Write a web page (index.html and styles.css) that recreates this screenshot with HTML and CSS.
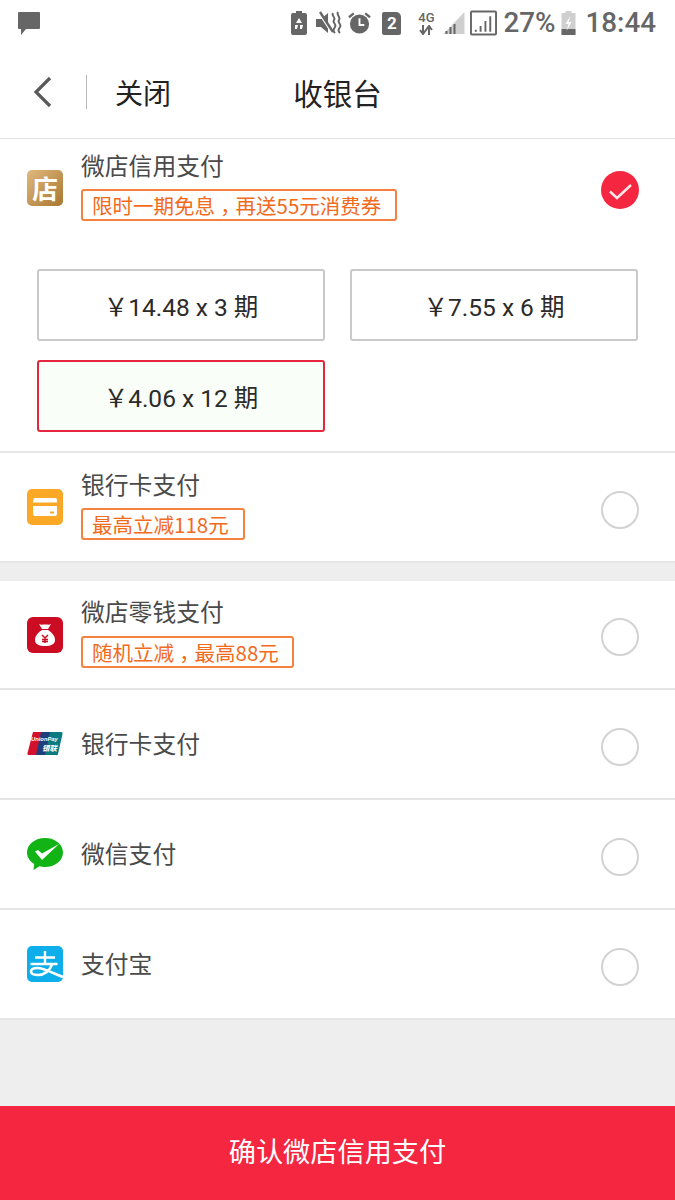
FILE: index.html
```html
<!DOCTYPE html>
<html lang="zh">
<head>
<meta charset="utf-8">
<title>收银台</title>
<link rel="stylesheet" href="styles.css">
</head>
<body>
<div class="page">
  <div class="status">
    <svg class="ic-msg" viewBox="0 0 24 24"><path d="M2 1h20a1 1 0 0 1 1 1v15a1 1 0 0 1-1 1H9l-5 6v-6H2a1 1 0 0 1-1-1V2a1 1 0 0 1 1-1z" fill="#666"/></svg>
    <div class="status-right">
      <svg class="si-batt" viewBox="0 0 16 24"><path d="M5 0h6v2h3a2 2 0 0 1 2 2v18a2 2 0 0 1-2 2H2a2 2 0 0 1-2-2V4a2 2 0 0 1 2-2h3z" fill="#666"/><path d="M8 7l3 5H5zM4 14h3l-1 4H4zM9 14h3l-1 4H9z" fill="#fff"/></svg>
      <svg class="si-mute" viewBox="0 0 26 24"><path d="M0 8h5l7-6v20l-7-6H0z" fill="#666"/><path d="M3 2l13 20" stroke="#fff" stroke-width="2"/><path d="M4 1l13 20" stroke="#666" stroke-width="2.4"/><path d="M17 2c-2 3 3 4 1 7s3 4 1 7-2 4 0 6M22 1c-2 3 3 5 1 8s3 4 1 7-2 4 0 6" fill="none" stroke="#666" stroke-width="2"/></svg>
      <svg class="si-alarm" viewBox="0 0 24 24"><circle cx="12" cy="13" r="10" fill="#666"/><path d="M12 7v7h5" fill="none" stroke="#fff" stroke-width="2"/><path d="M1 6l5-4M23 6l-5-4" stroke="#666" stroke-width="2.4"/></svg>
      <span class="si-sim">2</span>
      <span class="si-net"><b>4G</b><svg class="net-arrows" viewBox="0 0 18 10"><path d="M6 0v8M3 5l3 4 3-4M12 10V2M9 5l3-4 3 4" fill="none" stroke="#666" stroke-width="2"/></svg></span>
      <svg class="si-sig1" viewBox="0 0 22 24"><path d="M21 1v22H0z" fill="#cfcfcf"/><path d="M2 23h2v-3H2zM6 23h2v-7H6zM10 23h2V13h-2z" fill="#666"/></svg>
      <svg class="si-sig2" viewBox="0 0 28 26"><rect x="1" y="1" width="26" height="24" rx="1" fill="none" stroke="#666" stroke-width="2"/><path d="M5 22h2v-2H5zM10 22h2v-6h-2zM15 22h2V11h-2zM20 22h2V6h-2z" fill="#666"/></svg>
      <span class="st-pct">27%</span>
      <svg class="si-charge" viewBox="0 0 14 24"><path d="M4 0h6v2h4v22H0V2h4z" fill="#cfcfcf"/><path d="M0 18h14v6H0z" fill="#666"/><path d="M9 5l-5 8h3l-2 7 5-9H7z" fill="#fff"/></svg>
      <span class="st-time">18:44</span>
    </div>
  </div>

  <header class="nav">
    <div class="nav-left">
      <svg class="back" viewBox="0 0 20 32"><path d="M17 2L3 16l14 14" fill="none" stroke="#5a5a5a" stroke-width="3.2"/></svg>
      <span class="nav-div"></span>
      <span class="nav-close">关闭</span>
    </div>
    <h1 class="nav-title">收银台</h1>
    <div></div>
  </header>

  <section class="pay pay-open">
    <div class="row row-top">
      <span class="logo logo-shop">店</span>
      <div class="info info-tag">
        <div class="name">微店信用支付</div>
        <div class="tag tag-a">限时一期免息<span class="cm">，</span>再送55元消费券</div>
      </div>
      <span class="radio radio-on"><svg viewBox="0 0 38 38"><path d="M9 20.500l7 6.500L30 14" fill="none" stroke="#ffe9ec" stroke-width="2.400"/></svg></span>
    </div>
    <div class="plans">
      <div class="plan">￥14.48 x 3 期</div>
      <div class="plan">￥7.55 x 6 期</div>
      <div class="plan plan-on">￥4.06 x 12 期</div>
    </div>
  </section>

  <section class="pay pay-tag">
    <div class="row">
      <span class="logo logo-card"><svg viewBox="0 0 36 36"><path d="M8 9h20a2 2 0 0 1 2 2v14a2 2 0 0 1-2 2H8a2 2 0 0 1-2-2V11a2 2 0 0 1 2-2z" fill="#fff"/><path d="M6 13.500h24v3.500H6z" fill="#fba826"/><path d="M23 22.500h4v2h-4z" fill="#fba826"/></svg></span>
      <div class="info info-tag">
        <div class="name">银行卡支付</div>
        <div class="tag tag-b">最高立减118元</div>
      </div>
      <span class="radio"></span>
    </div>
  </section>

  <div class="gap"></div>

  <section class="pay pay-tag pay-t2">
    <div class="row">
      <span class="logo logo-bag"><svg viewBox="0 0 36 36"><path d="M12 7c2 1 3 .5 6 .5s4 .5 6-.5l-3 5h-6z" fill="#fff"/><path d="M15 13h6c5 3 7 7 7 10 0 4-4 6-10 6S8 27 8 23c0-3 2-7 7-10z" fill="#fff"/><path d="M15 18l3 3 3-3M18 21v5M15 22.500h6M15 24.500h6" fill="none" stroke="#cb0c23" stroke-width="1.500"/></svg></span>
      <div class="info info-tag">
        <div class="name">微店零钱支付</div>
        <div class="tag tag-c">随机立减<span class="cm">，</span>最高88元</div>
      </div>
      <span class="radio"></span>
    </div>
  </section>

  <section class="pay pay-plain">
    <div class="row">
      <svg class="logo" viewBox="0 0 36 36"><path d="M6 6h9l-5 23H2a1.500 1.500 0 0 1-1.500-2z" fill="#d3112c"/><path d="M14 6h12l-5 23H9z" fill="#1f3f7c"/><path d="M23 6h11a1.500 1.500 0 0 1 1.500 2L31 28a1.500 1.500 0 0 1-2 1H18z" fill="#0a7b80"/><text class="up-en" x="4" y="15">UnionPay</text><text class="up-zh" x="15" y="25">银联</text></svg>
      <div class="info"><div class="name">银行卡支付</div></div>
      <span class="radio"></span>
    </div>
  </section>

  <section class="pay pay-plain">
    <div class="row">
      <svg class="logo" viewBox="0 0 36 36"><path d="M18 2c10 0 18 6.300 18 14.500S28 31 18 31c-2 0-4-.3-5.500-.7L6.500 34l.7-6C2.800 25.300 0 21.200 0 16.500 0 8.300 8 2 18 2z" fill="#12b315"/><path d="M8 15.500l3-1.500 4 3.500L32 8 15 24z" fill="#fff"/></svg>
      <div class="info"><div class="name">微信支付</div></div>
      <span class="radio"></span>
    </div>
  </section>

  <section class="pay pay-plain">
    <div class="row">
      <svg class="logo" viewBox="0 0 36 36"><rect width="36" height="36" rx="5" fill="#0eaeea"/><path d="M8 11.500h20M18 5v14M3.500 18h27" fill="none" stroke="#fff" stroke-width="2.400"/><path d="M25 18c-2 7-8 11-14 11-4 0-7-1.200-7-3.500S7 22 10.500 22c6 0 15 5 25.500 9" fill="none" stroke="#fff" stroke-width="2.600"/></svg>
      <div class="info"><div class="name">支付宝</div></div>
      <span class="radio"></span>
    </div>
  </section>

  <div class="fill"></div>
  <button class="confirm">确认微店信用支付</button>
</div>
</body>
</html>
```
FILE: styles.css
```css
* { box-sizing: border-box; }
html, body { margin: 0; padding: 0; background: #fff; }
body { font-family: "Noto Sans CJK SC", "Roboto", sans-serif; }
.page { width: 675px; height: 1200px; display: flex; flex-direction: column; overflow: hidden; }

.status { height: 46px; flex: none; display: flex; justify-content: space-between; align-items: center; padding: 0 19px 0 17px; color: #666; }
.ic-msg { width: 24px; height: 24px; }
.status-right { display: flex; align-items: center; font-family: "Roboto", sans-serif; }
.si-batt { width: 16px; height: 24px; }
.si-mute { width: 26px; height: 24px; margin-left: 9px; }
.si-alarm { width: 23px; height: 24px; margin-left: 6px; }
.si-sim { width: 19px; height: 23px; margin-left: 11px; background: #666; color: #fff; font: 700 17px/23px "Roboto", sans-serif; text-align: center; border-radius: 2px 5px 2px 2px; }
.si-net { width: 18px; margin-left: 16px; display: flex; flex-direction: column; align-items: center; }
.si-net b { font-size: 13px; font-weight: 500; line-height: 14px; }
.net-arrows { width: 18px; height: 10px; display: block; }
.si-sig1 { width: 23px; height: 24px; margin-left: 8px; }
.si-sig2 { width: 27px; height: 26px; margin-left: 4px; }
.st-pct { font-size: 27.800px; font-weight: 500; line-height: 32px; margin-left: 6px; }
.si-charge { width: 15px; height: 24px; margin-left: 6px; }
.st-time { font-size: 27.800px; font-weight: 500; line-height: 32px; margin-left: 9px; }

.nav { height: 93px; flex: none; display: grid; grid-template-columns: 1fr auto 1fr; align-items: center; border-bottom: 1px solid #e3e3e3; padding-bottom: 1px; }
.nav-left { display: flex; align-items: center; padding-left: 33px; }
.back { width: 20px; height: 32px; }
.nav-div { width: 1px; height: 34px; background: #b9b9b9; margin-left: 33px; }
.nav-close { font-size: 28px; line-height: 40px; color: #222; margin-left: 28px; }
.nav-title { margin: 0; font-size: 29.500px; line-height: 40px; font-weight: 400; color: #222; }

.pay { border-bottom: 2px solid #e6e6e6; flex: none; }
.pay-open { height: 314px; }
.pay-tag { height: 110px; }
.pay-t2 { height: 109px; }
.pay-plain { height: 110px; }
.row { display: flex; align-items: center; height: 100%; padding: 0 36px 0 27px; }
.row-top { height: 102px; }
.row-top .logo { margin-bottom: 4px; }
.logo { width: 36px; height: 36px; flex: none; display: block; }
.logo svg { display: block; width: 36px; height: 36px; }
.logo-shop { border-radius: 5px; background: linear-gradient(135deg, #e0b97f, #a97630); color: #fff; font-size: 26px; line-height: 36px; text-align: center; font-weight: 700; }
.logo-card { border-radius: 5px; background: #fba826; }
.logo-bag { border-radius: 6px; background: #cb0c23; }
.up-en { font: italic 700 5.800px "Liberation Sans", sans-serif; fill: #fff; }
.up-zh { font: italic 700 7.500px "Noto Sans CJK SC", sans-serif; fill: #fff; }

.info { flex: 1; margin: 0 0 2px 18px; display: flex; flex-direction: column; align-items: flex-start; }
.info-tag { margin-bottom: 8px; }
.row-top .info-tag { margin-bottom: 12px; }
.name { font-size: 23.800px; line-height: 34px; color: #4a4a4a; }
.tag { height: 32px; margin-top: 7px; border: 2px solid #f4813f; border-radius: 3px; color: #f26a1b; font-size: 20.500px; line-height: 28px; padding-left: 9px; white-space: nowrap; }
.tag-a { width: 316px; }
.tag-b { width: 164px; }
.tag-c { width: 213px; margin-top: 8px; }
.cm { font-feature-settings: "halt"; padding: 0 .25em; }

.radio { width: 38px; height: 38px; flex: none; margin-top: 5px; border: 2px solid #d2d2d2; border-radius: 50%; }
.radio-on { margin-top: 0; background: #f5263f; border: 0; }
.radio-on svg { display: block; width: 38px; height: 38px; }

.plans { display: grid; grid-template-columns: 288px 288px; gap: 19px 25px; padding: 28px 0 0 37px; }
.plan { height: 72px; border: 2px solid #c9c9c9; border-radius: 3px; display: flex; align-items: center; justify-content: center; font-family: "Roboto", "Noto Sans CJK SC", sans-serif; font-size: 24.500px; color: #2b2b2b; }
.plan-on { border-color: #e5263f; background: #f9fff8; }

.gap { height: 18px; flex: none; background: #eeeeee; }
.fill { flex: 1; background: #eeeeee; }
.confirm { height: 94px; flex: none; border: 0; background: #f5263f; color: #fff; font-family: inherit; font-size: 27.200px; padding: 0 0 6px; }
```
